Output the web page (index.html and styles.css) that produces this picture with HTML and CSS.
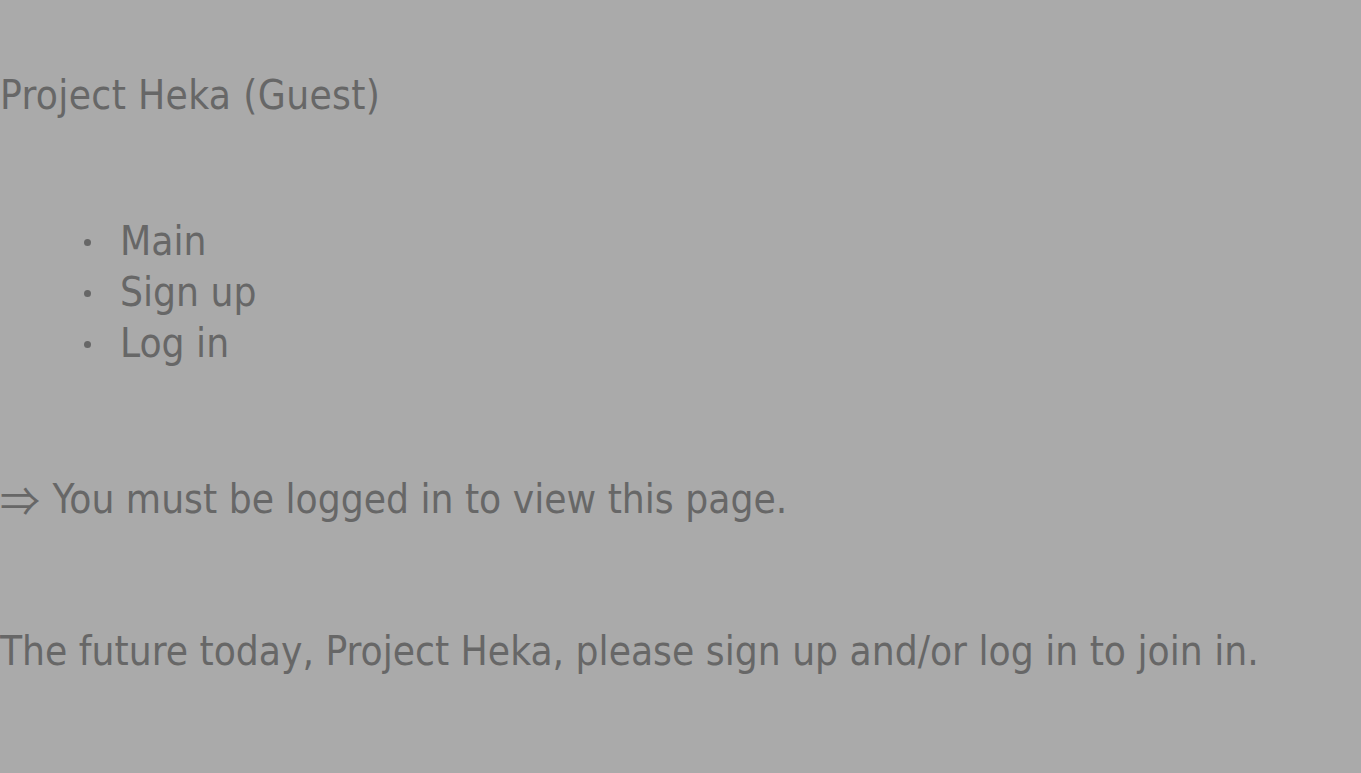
FILE: index.html
```html
<!DOCTYPE html>
<html><head><meta charset="utf-8"><link rel="stylesheet" href="styles.css"></head>
<body>
<div class="page">
  <div class="title">Project Heka (Guest)</div>
  <ul class="nav">
    <li>Main</li>
    <li>Sign up</li>
    <li>Log in</li>
  </ul>
  <p class="notice"><span class="arrow">⇒</span> You must be logged in to view this page.</p>
  <p class="intro">The future today, Project Heka, please sign up and/or log in to join in.</p>
</div>
</body></html>
```
FILE: styles.css
```css
html, body {
  margin: 0;
  background: #aaaaaa;
}
.page {
  color: #676767;
  font-family: "DejaVu Sans Condensed", "DejaVu Sans", sans-serif;
  font-size: 40.25px;
  line-height: 51px;
  padding-top: 70px;
  white-space: nowrap;
}
.title {
  margin: 0;
  letter-spacing: 0.35px;
}
.nav {
  list-style: none;
  margin: 95px 0 0;
  padding: 0 0 0 84px;
}
.nav li::before {
  content: "";
  display: inline-block;
  width: 7px;
  height: 7px;
  border-radius: 50%;
  background: #676767;
  margin-right: 29px;
  vertical-align: middle;
  position: relative;
  top: -2px;
}
.notice {
  margin: 105px 0 0;
}
.arrow {
  display: inline-block;
  width: 41px;
  font-family: "Noto Sans CJK JP", "DejaVu Sans", sans-serif;
  font-size: 40px;
  line-height: 51px;
  vertical-align: top;
}
.intro {
  margin: 101px 0 0;
}
```
